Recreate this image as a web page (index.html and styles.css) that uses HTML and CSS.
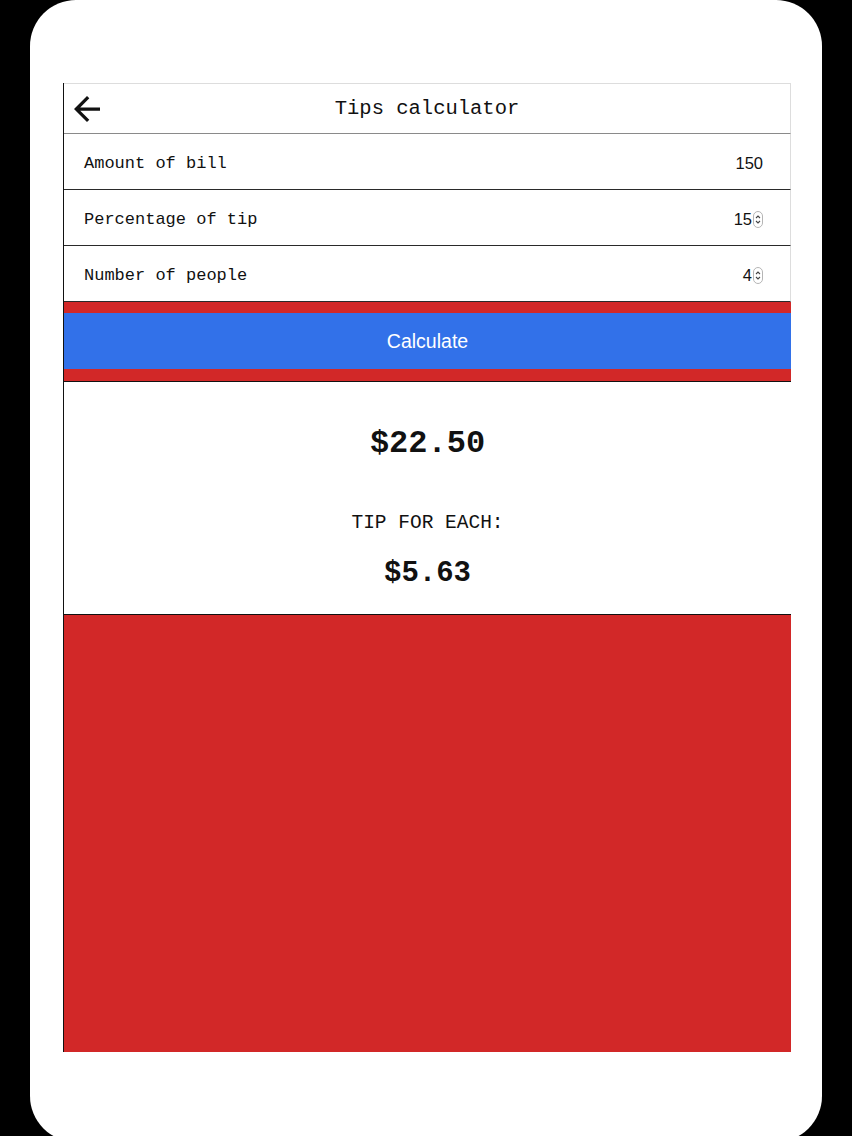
FILE: index.html
```html
<!DOCTYPE html>
<html lang="en">
<head>
    <meta charset="UTF-8">
    <meta name="viewport" content="width=device-width, initial-scale=1.0">
    <title>Tips calculator</title>
    <link rel="stylesheet" href="styles.css">
</head>
<body>

<div class="device">
    <div class="app">
        <header class="topbar">
            <span class="back">
                <svg width="26" height="26" viewBox="4 4 16 16"><path d="M20 11H7.83l5.59-5.59L12 4l-8 8 8 8 1.41-1.41L7.83 13H20v-2z" fill="#111"/></svg>
            </span>
            <h1>Tips calculator</h1>
            <span></span>
        </header>

        <div class="row">
            <span class="label">Amount of bill</span>
            <span class="value">150</span>
        </div>
        <div class="row">
            <span class="label">Percentage of tip</span>
            <span class="value">15<svg class="spin" width="10" height="17" viewBox="0 0 10 17"><rect x="0.5" y="0.5" width="9" height="16" rx="4.5" fill="#fff" stroke="#b5b5b5"/><path d="M3 7l2-2 2 2M3 10l2 2 2-2" fill="none" stroke="#444" stroke-width="1.1"/></svg></span>
        </div>
        <div class="row">
            <span class="label">Number of people</span>
            <span class="value">4<svg class="spin" width="10" height="17" viewBox="0 0 10 17"><rect x="0.5" y="0.5" width="9" height="16" rx="4.5" fill="#fff" stroke="#b5b5b5"/><path d="M3 7l2-2 2 2M3 10l2 2 2-2" fill="none" stroke="#444" stroke-width="1.1"/></svg></span>
        </div>

        <button class="calc-button">Calculate</button>

        <div class="result">
            <h2 class="total">$22.50</h2>
            <p class="each-label">TIP FOR EACH:</p>
            <h3 class="each">$5.63</h3>
        </div>
    </div>
</div>

</body>
</html>
```

FILE: styles.css
```css
body {
    margin: 0;
    padding: 0;
    background: #000000;
    overflow: hidden;
    font-family: 'Liberation Mono', 'Courier New', monospace;
    color: #111111;
}
.device {
    margin-left: 30px;
    width: 792px;
    height: 1142px;
    box-sizing: border-box;
    padding: 83px 0 0 33px;
    background: #ffffff;
    border-radius: 46px;
}
.app {
    width: 728px;
    height: 969px;
    box-sizing: border-box;
    background: #d22828;
    border-left: 1px solid #111111;
    display: flex;
    flex-direction: column;
}
.topbar {
    display: grid;
    grid-template-columns: 1fr auto 1fr;
    align-items: center;
    height: 49px;
    background: #ffffff;
    border-top: 1px solid #dddddd;
    border-bottom: 1px solid #8a8a8a;
    border-right: 1px solid #dddddd;
}
.back {
    display: flex;
    padding-left: 10px;
}
.topbar h1 {
    margin: 0;
    font-size: 20.5px;
    font-weight: normal;
}
.row {
    display: flex;
    align-items: center;
    justify-content: space-between;
    height: 52px;
    padding: 3px 27px 0 20px;
    background: #ffffff;
    border-bottom: 1px solid #2a2a2a;
    border-right: 1px solid #dddddd;
}
.label {
    font-size: 17px;
}
.value {
    display: flex;
    align-items: center;
    font-family: 'Liberation Sans', Arial, sans-serif;
    font-size: 16.5px;
}
.spin {
    margin-left: 1px;
}
.calc-button {
    height: 56px;
    margin: 11px 0 12px;
    border: none;
    background: #3271e9;
    color: #ffffff;
    font-family: 'Liberation Sans', Arial, sans-serif;
    font-size: 19.5px;
    cursor: pointer;
}
.result {
    height: 234px;
    box-sizing: border-box;
    padding-top: 42px;
    background: #ffffff;
    border-top: 1px solid #111111;
    border-bottom: 1px solid #111111;
    text-align: center;
}
.total {
    margin: 0;
    font-size: 32px;
    line-height: 40px;
}
.each-label {
    margin: 47px 0 0;
    font-size: 19.5px;
    line-height: 24px;
}
.each {
    margin: 21px 0 0;
    font-size: 29px;
    line-height: 36px;
}
```
